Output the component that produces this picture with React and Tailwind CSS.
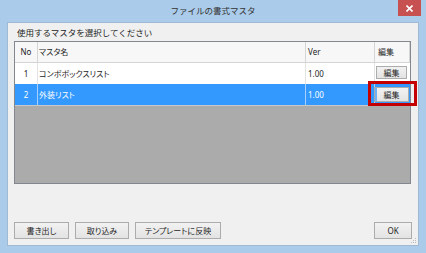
const font = { fontFamily: '"Noto Sans", "Noto Sans CJK JP", sans-serif' };

function WinButton({ children, className = "" }) {
  return (
    <div
      className={`flex items-center justify-center border border-[#acacac] bg-gradient-to-b from-[#f2f2f2] to-[#e3e3e3] text-[8px] leading-none text-[#1e1e1e] [font-feature-settings:'palt'] ${className}`}
    >
      {children}
    </div>
  );
}

function Row({ no, name, ver, selected, focused }) {
  const rowCls = selected ? "bg-[#3399ff] text-white" : "bg-white text-[#1e1e1e]";
  const line = selected ? "border-[#a8d0fb]" : "border-[#e3e3e3]";
  return (
    <div className={`flex h-[21px] text-[8px] leading-none ${rowCls}`}>
      <div className={`w-[23px] flex items-center justify-center border-r ${line}`}>{no}</div>
      <div className={`w-[268px] flex items-center pl-[1px] border-r ${line} [font-feature-settings:'palt']`}>{name}</div>
      <div className={`w-[69px] flex items-center pl-[2px] border-r ${line}`}>{ver}</div>
      <div className="w-[35px] flex items-center">
        {focused ? (
          <WinButton className="ml-[-1px] w-[35px] h-[15px] border-[#5a8fd0] shadow-[inset_2px_0_0_#6fb1f5]">編集</WinButton>
        ) : (
          <WinButton className="ml-[1px] w-[31px] h-[13px] mt-[-2px]">編集</WinButton>
        )}
      </div>
    </div>
  );
}

export default function App() {
  return (
    <div style={font} className="relative w-[426px] h-[253px] bg-[#aacbe9] flex flex-col overflow-hidden">
      {/* title bar */}
      <div className="h-[22px] grid grid-cols-[1fr_auto_1fr]">
        <div />
        <div className="flex items-center text-[8.5px] text-[#333] pt-[1px]">ファイルの書式マスタ</div>
        <div className="flex justify-end pr-[5px]">
          <div className="w-[23px] h-[16px] bg-[#c75050] flex items-center justify-center">
            <svg width="7" height="7" viewBox="0 0 7 7">
              <path d="M0.5 0.5 L6.5 6.5 M6.5 0.5 L0.5 6.5" stroke="white" strokeWidth="1.6" />
            </svg>
          </div>
        </div>
      </div>

      {/* client */}
      <div className="mx-[7px] h-[224px] bg-[#f0f0f0] border border-[#9fb9d3] flex flex-col px-[6px] relative">
        <div className="pl-[3px] pt-[2px] h-[18px] flex items-center text-[8.5px] text-[#1e1e1e]">
          使用するマスタを選択してください
        </div>

        <div className="w-[397px] h-[143px] border border-[#828790] bg-[#ababab] flex flex-col">
          <div className="flex h-[21px] bg-[#f7f7f7] border-b border-[#d5d5d5] text-[8px] leading-none text-[#1e1e1e] [font-feature-settings:'palt']">
            <div className="w-[23px] flex items-center justify-center border-r border-[#d5d5d5]">No</div>
            <div className="w-[268px] flex items-center pl-[1px] border-r border-[#d5d5d5]">マスタ名</div>
            <div className="w-[69px] flex items-center pl-[2px] border-r border-[#d5d5d5]">Ver</div>
            <div className="w-[35px] flex items-center pl-[3px] border-r border-[#d5d5d5]">編集</div>
          </div>
          <Row no="1" name="コンボボックスリスト" ver="1.00" />
          <Row no="2" name="外装リスト" ver="1.00" selected focused />
          <div className="h-[1px] bg-[#c8c8c8]" />
        </div>

        <div className="flex-1" />

        <div className="flex gap-[6px] h-[17px] mb-[6px]">
          <WinButton className="w-[55px]">書き出し</WinButton>
          <WinButton className="w-[54px]">取り込み</WinButton>
          <WinButton className="w-[86px]">テンプレートに反映</WinButton>
          <div className="flex-1" />
          <WinButton className="w-[38px]">OK</WinButton>
        </div>

        {/* resize grip */}
        <svg className="absolute right-[1px] bottom-[1px]" width="6" height="6" viewBox="0 0 6 6">
          <rect x="4" y="0" width="1" height="1" fill="#bcbcbc" />
          <rect x="2" y="2" width="1" height="1" fill="#bcbcbc" />
          <rect x="4" y="2" width="1" height="1" fill="#bcbcbc" />
          <rect x="0" y="4" width="1" height="1" fill="#bcbcbc" />
          <rect x="2" y="4" width="1" height="1" fill="#bcbcbc" />
          <rect x="4" y="4" width="1" height="1" fill="#bcbcbc" />
        </svg>
      </div>

      {/* highlight annotation */}
      <div className="absolute left-[368px] top-[81px] w-[49px] h-[25px] border-[3px] border-[#c40000]" />
    </div>
  );
}
